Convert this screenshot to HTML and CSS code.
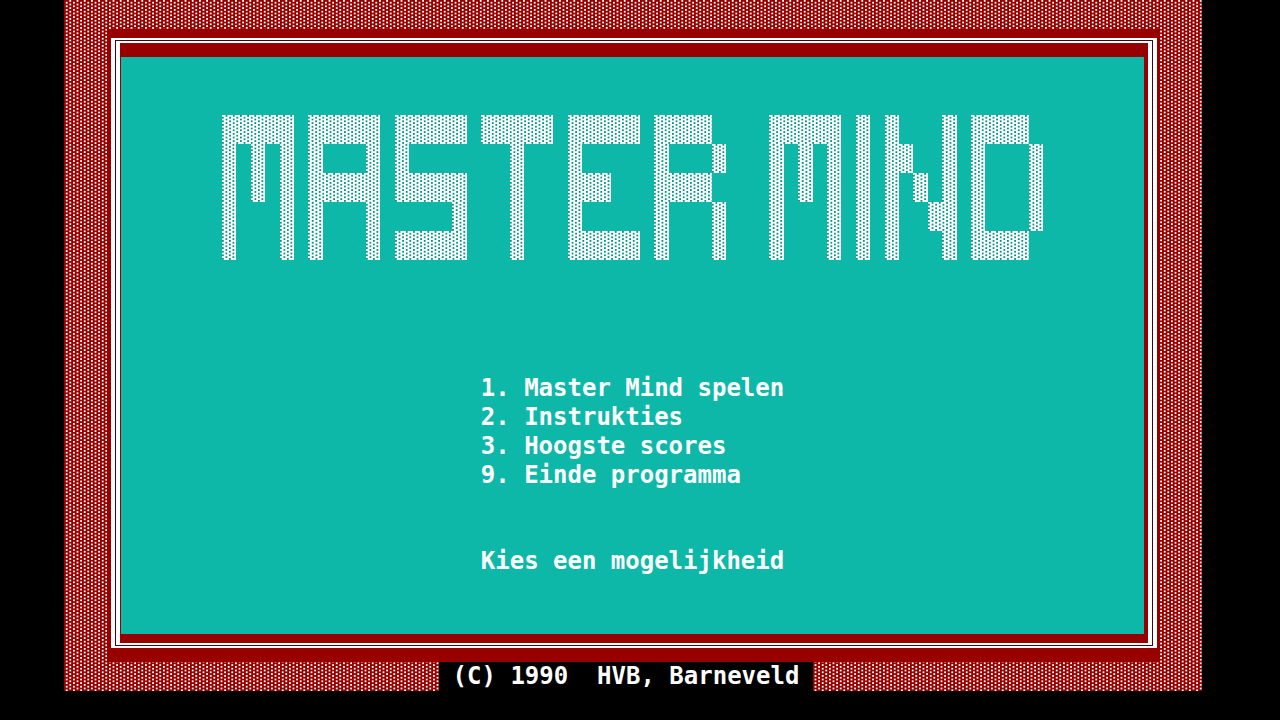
FILE: index.html
```html
<!DOCTYPE html>
<html lang="nl">
<head>
<meta charset="utf-8">
<title>Master Mind</title>
<link rel="stylesheet" href="styles.css">
</head>
<body>
<div class="screen">
  <div class="frame">
    <div class="line-outer">
      <div class="line-inner">
        <main class="panel">
          <h1 class="banner" aria-label="Master Mind"></h1>
          <div class="choices">
            <nav class="menu">
              <button type="button">1. Master Mind spelen</button>
              <button type="button">2. Instrukties</button>
              <button type="button">3. Hoogste scores</button>
              <button type="button">9. Einde programma</button>
            </nav>
            <p class="prompt">Kies een mogelijkheid</p>
          </div>
        </main>
      </div>
    </div>
  </div>
  <footer class="credit">(C) 1990  HVB, Barneveld</footer>
</div>
<script src="banner.js"></script>
</body>
</html>
```
FILE: styles.css
```css
* {
  box-sizing: border-box;
}

body {
  margin: 0;
  background: #000;
  color: #fff;
  font: bold 24px/29px "DejaVu Sans Mono", "Liberation Mono", monospace;
}

.screen {
  display: flex;
  flex-direction: column;
  min-height: calc(100vh - 29px);
  margin: 0 78px 29px 64px;
  padding: 29px 43px 0;
  background: #980000 url("data:image/svg+xml,%3Csvg xmlns='http://www.w3.org/2000/svg' width='36' height='36' viewBox='0 0 20 20'%3E%3Cpattern id='p' width='4' height='2' patternUnits='userSpaceOnUse'%3E%3Cpath fill='%23fff' d='M3 0h1v1h-1zM1 1h1v1h-1z'/%3E%3C/pattern%3E%3Crect width='20' height='20' fill='url(%23p)'/%3E%3C/svg%3E");
}

.frame {
  display: flex;
  flex: 1;
  padding: 9px 2px 14px 4px;
  background: #980000;
}

.line-outer {
  display: flex;
  flex: 1;
  border: solid #fff;
  border-width: 2px 4px;
  padding: 1px;
  background: #4c0010;
}

.line-inner {
  display: flex;
  flex: 1;
  border: solid #fff;
  border-width: 2px 4px;
  padding: 14px 4px 9px 1px;
  background: #980000;
}

.panel {
  display: flex;
  flex: 1;
  flex-direction: column;
  align-items: center;
  padding: 58px 16px;
  background: #0eb8a8;
}

.banner {
  display: grid;
  grid-template-columns: repeat(57, 1fr);
  grid-auto-rows: 29px;
  width: 821px;
  max-width: 100%;
  margin: 0 0 114px;
}

.run {
  background: #fff url("data:image/svg+xml,%3Csvg xmlns='http://www.w3.org/2000/svg' width='36' height='36' viewBox='0 0 20 20'%3E%3Cpattern id='p' width='4' height='2' patternUnits='userSpaceOnUse'%3E%3Cpath fill='%23009486' d='M2 0h1v1h-1zM0 1h1v1h-1z'/%3E%3C/pattern%3E%3Crect width='20' height='20' fill='url(%23p)'/%3E%3C/svg%3E");
}

.menu {
  display: flex;
  flex-direction: column;
  align-items: flex-start;
}

.menu button {
  border: 0;
  padding: 0;
  background: none;
  color: inherit;
  font: inherit;
  text-align: left;
  cursor: pointer;
}

.prompt {
  margin: 57px 0 0;
}

.credit {
  align-self: center;
  margin-right: 14px;
  padding: 0 14px;
  background: #000;
  white-space: pre;
}
```
FILE: banner.js
```js
// Each # is one character cell of the banner.
const rows = [
  "##### ##### ##### ##### ##### ####    ##### # #   # #### ",
  "# # # #   # #       #   #     #   #   # # # # ##  # #   #",
  "# # # ##### #####   #   ###   ####    # # # # # # # #   #",
  "#   # #   #     #   #   #     #   #   #   # # #  ## #   #",
  "#   # #   # #####   #   ##### #   #   #   # # #   # #### "
];

const banner = document.querySelector(".banner");
rows.forEach((row, y) => {
  for (const run of row.matchAll(/#+/g)) {
    const cell = document.createElement("span");
    cell.className = "run";
    cell.style.gridArea = `${y + 1} / ${run.index + 1} / auto / span ${run[0].length}`;
    banner.append(cell);
  }
});
```
